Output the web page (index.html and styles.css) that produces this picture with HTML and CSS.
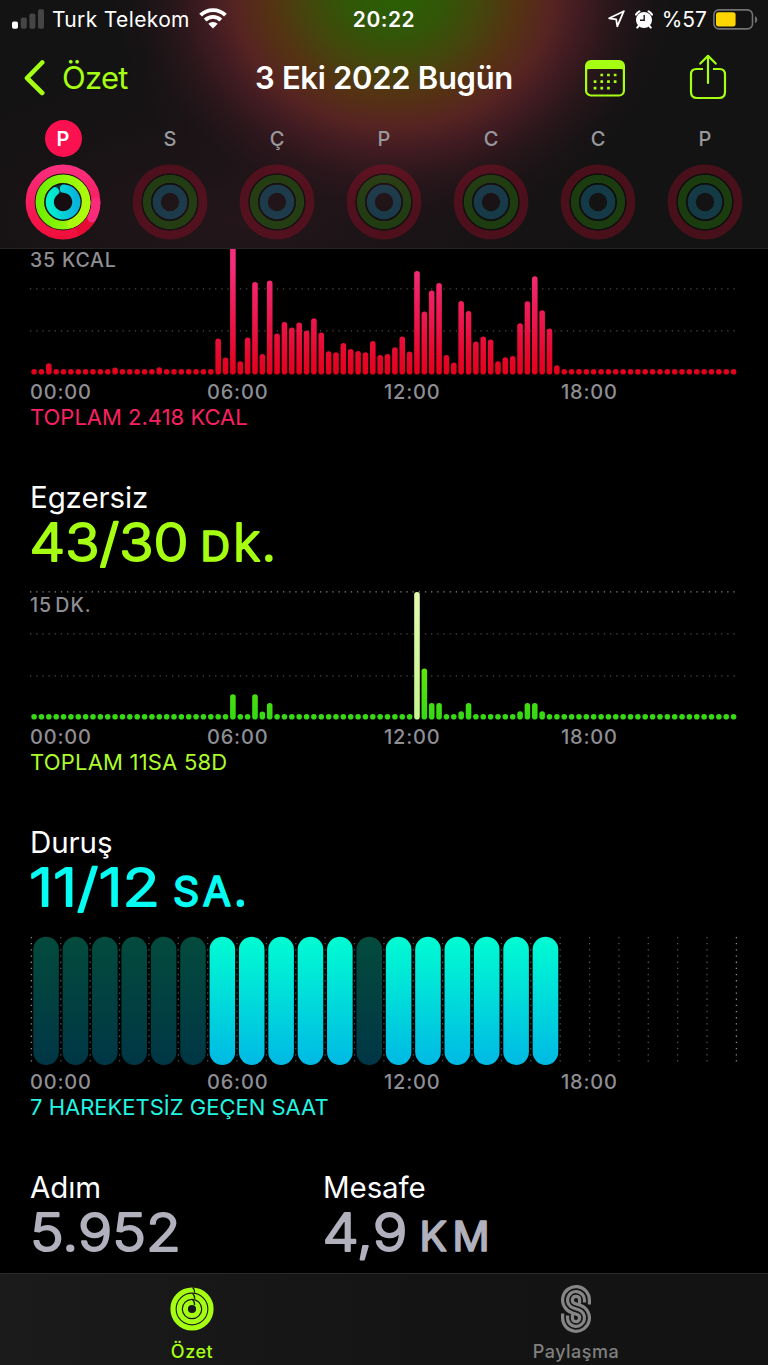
FILE: index.html
```html
<!DOCTYPE html>
<html lang="tr">
<head>
<meta charset="utf-8">
<title>Özet</title>
<link rel="stylesheet" href="styles.css">
</head>
<body>
<div class="screen">
  <header class="top">
    <div class="status">
      <div class="status-side">
        <svg class="signal" width="32" height="20" viewBox="0 0 32 20"><rect x="0" y="12.5" width="6" height="7.2" rx="1.8" fill="#fff"/><g fill="#454545"><rect x="8.8" y="8.5" width="6" height="11.2" rx="1.8"/><rect x="17.4" y="4.5" width="6" height="15.2" rx="1.8"/><rect x="26" y="0.3" width="6" height="19.4" rx="1.8"/></g></svg>
        <span class="carrier">Turk Telekom</span>
        <svg class="wifi" width="28" height="21" viewBox="0 0 28 21"><g fill="none" stroke="#fff" stroke-width="3.9"><path d="M1.6 7.2A17.6 17.6 0 0 1 26.4 7.2"/><path d="M6.2 12.1A11.1 11.1 0 0 1 21.8 12.1"/></g><path d="M14 20.6 9.3 15.8A6.8 6.8 0 0 1 18.7 15.8Z" fill="#fff"/></svg>
      </div>
      <span class="clock">20:22</span>
      <div class="status-side right">
        <svg class="loc" width="17" height="18" viewBox="0 0 17 18"><path d="M15.8 1.2 1.2 8.3 8.2 9.3 9.3 16.4Z" fill="none" stroke="#fff" stroke-width="1.8" stroke-linejoin="round"/></svg>
        <svg class="alarm" width="18" height="19" viewBox="0 0 18 19"><circle cx="9" cy="10" r="8" fill="#fff"/><path d="M1 4.6A8 8 0 0 1 4.4 1.3M13.6 1.3A8 8 0 0 1 17 4.6M3.6 16 2.2 17.6M14.4 16l1.4 1.6" stroke="#fff" stroke-width="2" stroke-linecap="round" fill="none"/><path d="M9.2 5v5.2H5" stroke="#191414" stroke-width="1.4" fill="none"/></svg>
        <span class="percent">%57</span>
        <svg class="battery" width="45" height="21" viewBox="0 0 45 21"><rect x="0.9" y="0.9" width="38.6" height="19" rx="5" fill="none" stroke="#727272" stroke-width="1.6"/><rect x="3" y="3.2" width="19.6" height="14.2" rx="2.6" fill="#ffd500"/><path d="M42 7a4 4 0 0 1 0 7.2Z" fill="#727272"/></svg>
      </div>
    </div>
    <nav class="nav">
      <div class="back">
        <svg width="22" height="36" viewBox="0 0 22 36"><path d="M18.2 2.5 3 18 18.2 33" fill="none" stroke="#a6ff12" stroke-width="4.6" stroke-linecap="round" stroke-linejoin="round"/></svg>
        <span>Özet</span>
      </div>
      <h1>3 Eki 2022 Bugün</h1>
      <svg class="calendar" width="40" height="37" viewBox="0 0 40 37"><rect x="1.1" y="1.1" width="37.8" height="34.4" rx="4.8" fill="none" stroke="#a6ff12" stroke-width="2.2"/><path d="M1 10V6Q1 1 6 1H34Q39 1 39 6V10Q38 9 35 9H5Q2 9 1 10Z" fill="#a6ff12"/><path d="M15.4 15H33M8.7 21.6H33M8.7 28.2H26" stroke="#a6ff12" stroke-width="2.7" stroke-dasharray="2.7 4"/></svg>
      <svg class="share" width="38" height="46" viewBox="0 0 38 46"><path d="M14 15H7.5Q2 15 2 20.5V38Q2 44 8 44H30Q36 44 36 38V20.5Q36 15 30.5 15H24" fill="none" stroke="#a6ff12" stroke-width="2.2"/><path d="M19 29V2.5M11.3 9.6 19 1.8 26.7 9.6" fill="none" stroke="#a6ff12" stroke-width="2.2" stroke-linecap="round" stroke-linejoin="round"/></svg>
    </nav>
    <div class="week" id="week"></div>
  </header>

  <main class="content">
    <section class="metric move">
      <svg class="chart" id="moveChart" width="708" height="130" viewBox="0 0 708 130"></svg>
      <div class="limit">35 KCAL</div>
      <div class="hours"><span>00:00</span><span>06:00</span><span>12:00</span><span>18:00</span></div>
      <p class="total t1">TOPLAM 2.418 KCAL</p>
    </section>

    <section class="metric exercise">
      <h2>Egzersiz</h2>
      <svg class="value" width="300" height="60" viewBox="0 0 300 60"><text x="-0.5" y="45.5" class="num" textLength="159" lengthAdjust="spacingAndGlyphs">43/30</text><text x="170.5" y="45.5" class="unit">D</text><text x="203" y="45.5" class="num">k</text><text x="231.5" y="45.5" class="num">.</text></svg>
      <svg class="chart" id="exerciseChart" width="708" height="130" viewBox="0 0 708 130"></svg>
      <div class="limit narrow">15 DK.</div>
      <div class="hours"><span>00:00</span><span>06:00</span><span>12:00</span><span>18:00</span></div>
      <p class="total t2">TOPLAM 11SA 58D</p>
    </section>

    <section class="metric stand">
      <h2>Duruş</h2>
      <svg class="value" width="300" height="60" viewBox="0 0 300 60"><text x="-1" y="45.5" class="num" textLength="131" lengthAdjust="spacingAndGlyphs">11/12</text><text x="143" y="45.5" class="unit" textLength="58">SA</text><text x="203" y="45.5" class="num">.</text></svg>
      <svg class="chart" id="standChart" width="708" height="130" viewBox="0 0 708 130"></svg>
      <div class="hours"><span>00:00</span><span>06:00</span><span>12:00</span><span>18:00</span></div>
      <p class="total t3">7 HAREKETSİZ GEÇEN SAAT</p>
    </section>

    <section class="stats">
      <div>
        <h2>Adım</h2>
        <svg class="value" width="280" height="60" viewBox="0 0 280 60"><text x="0" y="45.5" class="num" textLength="151" lengthAdjust="spacingAndGlyphs">5.952</text></svg>
      </div>
      <div>
        <h2>Mesafe</h2>
        <svg class="value" width="280" height="60" viewBox="0 0 280 60"><text x="-0.5" y="45.5" class="num" textLength="85" lengthAdjust="spacingAndGlyphs">4,9</text><text x="96.5" y="45.5" class="unit" textLength="70">KM</text></svg>
      </div>
    </section>
  </main>

  <footer class="tabs">
    <div class="tab active">
      <svg width="44" height="50" viewBox="0 0 44 50"><g fill="none" stroke="#a6ff12"><circle cx="22" cy="25" r="19" stroke-width="5.2"/><circle cx="22" cy="25" r="12.8" stroke-width="5"/><circle cx="22" cy="25" r="6.6" stroke-width="5"/></g><path d="M22.6 3.4Q25 5.5 24.6 8.6M22.6 9.6Q25 11.8 24.6 14.8M22.6 15.8Q25 18 24.6 21" fill="none" stroke="#1b2b08" stroke-width="1.4"/></svg>
      <span>Özet</span>
    </div>
    <div class="tab">
      <svg width="30" height="50" viewBox="0 0 30 50"><g fill="none" stroke="#868686" stroke-width="3.2"><path d="M28.4 20.5V16A13.4 13.4 0 1 0 10.85 28.7L16.1 30.5A3.6 3.6 0 1 1 11.4 33.9V30.5"/><path d="M23.5 18.5V16A8.5 8.5 0 1 0 12.4 24.1L17.6 25.8A8.5 8.5 0 1 1 6.5 33.9V31.4"/><path d="M18.6 19.4V16A3.6 3.6 0 1 0 13.9 19.4L19.15 21.2A13.4 13.4 0 1 1 1.6 33.9V29.4"/></g></svg>
      <span>Paylaşma</span>
    </div>
  </footer>
</div>
<script src="script.js"></script>
</body>
</html>
```
FILE: styles.css
```css
* { box-sizing: border-box; }
body { margin: 0; background: #000; color: #fff; font-family: Inter, "Liberation Sans", sans-serif; }
h1, h2, p { margin: 0; }
svg { display: block; flex: none; }
.screen { width: 768px; height: 1365px; display: flex; flex-direction: column; overflow: hidden; background: #000; }

.top {
  height: 249px; flex: none; position: relative; z-index: 1; overflow: hidden;
  border-bottom: 1px solid #242424;
  background:
    radial-gradient(ellipse 285px 240px at 394px -8px, #2a6004 0%, #325607 18%, #44460d 31%, #553213 44%, #562422 56%, rgba(72,29,36,.85) 66%, rgba(52,24,31,.6) 78%, rgba(38,20,26,.25) 90%, rgba(30,18,22,0) 100%),
    radial-gradient(ellipse 400px 170px at 240px 220px, rgba(52,24,34,.5), rgba(38,20,27,.25) 55%, rgba(20,20,20,0) 100%),
    #131313;
}
.status { height: 38px; padding: 0 12px; display: grid; grid-template-columns: 1fr auto 1fr; align-items: center; font-size: 21px; }
.status-side { display: flex; align-items: center; }
.right { justify-content: flex-end; }
.carrier { margin-left: 8px; width: 139px; letter-spacing: .35px; white-space: nowrap; }
.wifi { margin-left: 8px; margin-top: -2px; }
.clock { font-weight: 600; letter-spacing: .5px; }
.alarm { margin-left: 10px; }
.percent { margin-left: 9px; }
.battery { margin: 0 -2px 0 6px; }
.nav { height: 80px; display: grid; grid-template-columns: 207px 310px 86px 1fr; align-items: center; padding-left: 22px; }
.back { display: flex; align-items: center; gap: 16px; padding-left: 2px; color: #a6ff12; font-size: 31px; letter-spacing: -.7px; }
.nav h1, .back span { position: relative; top: -1px; }
.nav h1 { font-size: 31px; font-weight: 600; letter-spacing: -.3px; white-space: nowrap; text-align: center; }
.calendar { margin-left: 46px; }
.share { margin-left: 64px; margin-top: -2px; }
.week { display: grid; grid-template-columns: repeat(7, 107px); margin-left: 9.5px; }
.day { display: flex; flex-direction: column; align-items: center; color: #98989d; font-size: 20px; font-weight: 500; }
.day b { font-weight: 500; width: 37px; height: 37px; margin-top: 2px; border-radius: 50%; display: grid; place-items: center; }
.day.today b { background: #fc1150; color: #fff; font-weight: 600; }
.day svg { margin-top: 7px; }
.day.idle svg { opacity: .3; }

.content { flex: 1; min-height: 0; overflow: hidden; padding: 0 30px; }
.metric { height: 345px; display: grid; grid-template-columns: 1fr; align-content: start; }
.move { height: 227px; margin-top: -3px; }
.exercise .chart, .stand .chart { margin-top: 16px; }
.limit { color: #8e8e93; font-size: 19.5px; font-weight: 500; letter-spacing: .8px; line-height: 24px; height: 0; margin-top: -128px; margin-bottom: 128px; }
.narrow { word-spacing: -3px; letter-spacing: 1px; }
.hours { display: grid; grid-template-columns: repeat(4, 177px); color: #8e8e93; font-size: 20px; font-weight: 500; letter-spacing: .8px; line-height: 26px; margin-top: 3px; }
.total { font-size: 22px; line-height: 26px; margin-top: -1px; white-space: nowrap; }
.t1 { color: #fb2160; }
.t2 { color: #adfb2c; letter-spacing: .2px; }
.t3 { color: #22f5e2; }
.metric h2, .stats h2 { font-size: 29.5px; font-weight: 400; line-height: 36px; height: 36px; margin-top: 6px; letter-spacing: -.1px; }
.value { overflow: visible; }
.exercise .value { fill: #a6ff12; stroke: #a6ff12; }
.stand .value { fill: #06fdf3; stroke: #06fdf3; }
.stats .value { fill: #b1b1be; stroke: #b1b1be; }
.num { font-size: 52px; font-weight: 300; stroke-width: 2px; stroke-linejoin: round; }
.unit { font-size: 41px; font-weight: 400; stroke-width: 1.7px; stroke-linejoin: round; }
.stats { display: grid; grid-template-columns: 293px 1fr; }

.tabs { height: 92px; flex: none; display: grid; grid-template-columns: 1fr 1fr; border-top: 1px solid #2a2a2a; background: linear-gradient(90deg, #1b1b1b, #141414 55%, #131313); }
.tab { display: flex; flex-direction: column; align-items: center; padding-top: 10px; font-size: 18px; font-weight: 500; color: #808080; letter-spacing: .5px; }
.tab svg { position: relative; left: -.5px; }
.tab span { margin-top: 6px; line-height: 24px; }
.tab.active { color: #a6ff12; }
```
FILE: script.js
```js
// Quarter-hour values; slots that are not listed hold the minimum dot.
const move = {2:11.3,11:7,17:7.3,25:36,26:17,27:129,28:13.3,29:37,30:92.7,31:20.7,32:94,33:41,34:52.7,35:47,36:52,37:44,38:56.3,39:42,40:23.3,41:22.3,42:31.7,43:25.7,44:23.7,45:22.3,46:33.7,47:19.7,48:20.7,49:27.3,50:38,51:23,52:103.7,53:63,54:84,55:91.7,56:19.7,57:12,58:73.7,59:63.7,60:33,61:38,62:35,63:13.3,64:17.3,65:18.7,66:51.3,67:73.3,68:98.3,69:64.3,70:46,71:9.3};
const exercise = {27:25.3,30:25.3,31:8,32:16.7,52:127.7,53:51,54:16.7,55:16.7,58:8.3,59:16.7,66:8.3,67:16.7,68:16.7,69:8.3};

const gradient = (id, y1, y2, a, b) =>
  `<linearGradient id="${id}" gradientUnits="userSpaceOnUse" x1="0" x2="0" y1="${y1}" y2="${y2}"><stop stop-color="${a}"/><stop offset="1" stop-color="${b}"/></linearGradient>`;

function barChart(id, data, defs, fillFor) {
  let out = `<defs>${defs}</defs>`;
  [0.9, 42.9, 84.9].forEach((y, i) => {
    out += `<path d="M0 ${y}H707" stroke="${i ? '#4b4b4b' : '#858585'}" stroke-width="1.3" stroke-dasharray="1.3 4.87"/>`;
  });
  for (let i = 0; i < 96; i++) {
    const h = data[i] || 5.6, x = 4.1 + i * 7.363;
    out += `<rect x="${(x - 2.8).toFixed(2)}" y="${(128.6 - h).toFixed(2)}" width="5.6" height="${h}" rx="2.8" fill="${fillFor(i, h)}"/>`;
  }
  document.getElementById(id).innerHTML = out;
}
barChart('moveChart', move, gradient('mv', 20, 128, '#f42d7c', '#e3001b'), () => 'url(#mv)');
barChart('exerciseChart', exercise,
  gradient('ex', 0, 128, '#a5f500', '#35d914') + gradient('pk', 0, 128, '#e3fbb0', '#c6f58f'),
  i => i === 52 ? 'url(#pk)' : 'url(#ex)');

let stand = `<defs>${gradient('on', 1, 129, '#00fcd2', '#00b9e4')}${gradient('off', 1, 129, '#034b3d', '#003645')}</defs>`;
for (let i = 0; i <= 24; i++) {
  const x = 1.4 + i * 29.375;
  stand += `<path d="M${x} .9V127" stroke="${i % 24 ? '#555' : '#8b8b8b'}" stroke-width="1.3" stroke-dasharray="1.3 4.87"/>`;
  if (i < 18) stand += `<rect x="${x + 1.9}" y="0.7" width="25.6" height="128.2" rx="12.8" fill="url(#${i < 6 || i === 11 ? 'off' : 'on'})"/>`;
}
document.getElementById('standChart').innerHTML = stand;

const idleRings = '<g fill="none"><circle cx="38" cy="38" r="32.9" stroke="#c40a2c" stroke-width="9"/><circle cx="38" cy="38" r="23.2" stroke="#2e9a08" stroke-width="8.4"/><circle cx="38" cy="38" r="13.3" stroke="#1793bd" stroke-width="8.2"/><g stroke="#050505" stroke-width="1.4"><circle cx="38" cy="38" r="27.9"/><circle cx="38" cy="38" r="18.2"/></g></g>';
const todayRings = `<defs>${gradient('r1', 2, 74, '#fb2e80', '#f00e3b')}<linearGradient id="r2"><stop stop-color="#6fee00"/><stop offset="1" stop-color="#adfb0c"/></linearGradient><linearGradient id="r3"><stop stop-color="#00efcf"/><stop offset="1" stop-color="#08b4dc"/></linearGradient></defs>
<circle cx="38" cy="38" r="37.2" fill="#170c10"/>
<g fill="none" stroke-linecap="round"><circle cx="38" cy="38" r="32.9" stroke="url(#r1)" stroke-width="9"/><path d="M66.8 54A32.9 32.9 0 0 1 52 67.8" stroke="#e50c34" stroke-width="9" stroke-linecap="butt"/><path d="M70.9 38A32.9 32.9 0 0 1 66.8 54" stroke="#fb2b7c" stroke-width="9"/>
<circle cx="38" cy="38" r="23.2" stroke="url(#r2)" stroke-width="8.6"/><path d="M61.2 38A23.2 23.2 0 0 1 46.2 59.7" stroke="#adfb0c" stroke-width="8.6"/>
<circle cx="38" cy="38" r="13.3" stroke="#06323a" stroke-width="8.2"/><path d="M39 24.7A13.3 13.3 0 1 1 30 27.4" stroke="url(#r3)" stroke-width="8.2"/></g>`;
document.getElementById('week').innerHTML = ['P', 'S', 'Ç', 'P', 'C', 'C', 'P'].map((d, i) =>
  `<div class="day ${i ? 'idle' : 'today'}"><b>${d}</b><svg width="76" height="76" viewBox="0 0 76 76">${i ? idleRings : todayRings}</svg></div>`).join('');
```
